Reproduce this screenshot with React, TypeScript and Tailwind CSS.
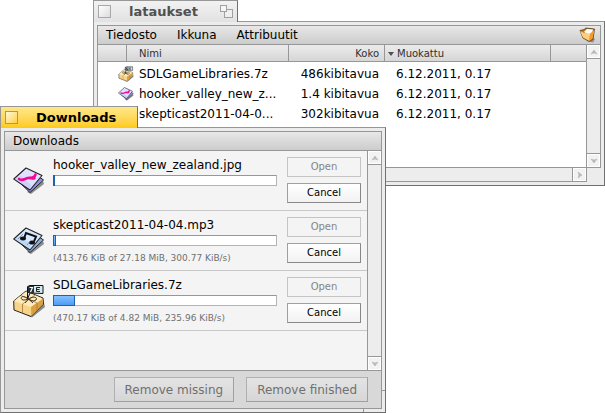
import React from "react";

type FileKind = "image" | "audio" | "archive";

function FileIcon({ kind, className }: { kind: FileKind; className: string }) {
  if (kind === "archive") {
    return (
      <svg viewBox="0 0 32 34" className={className} aria-hidden="true">
        <path d="M14 31 L19 33.500 L32 23 L31 19Z" fill="#8a8a8a" />
        <path d="M0.700 17 L13 7 L30 14 L30.500 20 L18 32.500 L1 26Z" fill="#f8d48a" stroke="#222" strokeWidth="1" strokeLinejoin="round" />
        <path d="M1 17 L13 7.500 L29.500 14.500 L18 23Z" fill="#ffeab8" />
        <path d="M18 23 L29.700 15 L30 20 L18.300 32Z" fill="#dca040" />
        <path d="M8 11.500 L24 19 V26 M22 11 L9.500 20 V29" stroke="#a5793a" fill="none" strokeWidth="0.800" />
        <path d="M15.500 15 C9 10 7 14 9 15.500 C11 17 14 15 15.500 15 C20 12 25 13 23 16 C20 18 17 16 15.500 15 L12 19 M15.500 15 L20 19" stroke="#222" fill="none" strokeWidth="0.900" />
        <path d="M14.500 15 V2.500 L17 1.500 L30 1.500 V9.500 L17 9Z" fill="#d5e9ef" stroke="#111" strokeWidth="1" />
        <path d="M15 2 H21 V9 H15Z" fill="#253038" />
        <path d="M16.500 3.500 H19.500 L17.500 8" stroke="#fff" fill="none" strokeWidth="1.200" />
        <path d="M27 3.500 H23.500 V7.500 H27 M23.500 5.500 H26.500" stroke="#222" fill="none" strokeWidth="1" />
      </svg>
    );
  }
  return (
    <svg viewBox="0 0 32 28" className={className} aria-hidden="true">
      <path d="M18 27 L31 17 L30 14 L14 25Z" fill="#8c8c8c" />
      <path d="M5 14 L18 4 L30.500 13 L17 25.500Z" fill={kind === "image" ? "#8d92e4" : "#8cabdc"} stroke="#222" />
      <path d="M0.800 12 L13 1 L29 8.500 L17 23Z" fill={kind === "image" ? "#dfe1ff" : "#d7e9ff"} stroke="#222" strokeWidth="1.100" strokeLinejoin="round" />
      <path d="M1.500 12 L17 22 L18 18 L8 9Z" fill={kind === "image" ? "#c0c4fa" : "#afcdf2"} opacity="0.600" />
      {kind === "image" ? (
        <path d="M6 12 C9 14.500 12 11.500 15 11 C18 10.500 20 12.500 21.500 11 M16 11 C19 11 22 10 22.500 7.500" stroke="#f20a95" strokeWidth="2.600" fill="none" strokeLinecap="round" />
      ) : (
        <g>
          <path d="M11 11.500 L13 6 L23 9.500 L21 14.500" stroke="#111" strokeWidth="2" fill="none" />
          <ellipse cx="10" cy="11.500" rx="3" ry="1.900" fill="#111" />
          <ellipse cx="19" cy="15.500" rx="3" ry="2.100" fill="#111" />
          <path d="M5 12 L10 7 M14 18 L17 14" stroke="#7896bb" strokeWidth="1" />
        </g>
      )}
    </svg>
  );
}

function FolderIcon() {
  return (
    <svg viewBox="0 0 17 16" className="h-4 w-[17px]" aria-hidden="true">
      <path d="M7 14 L14 15.500 L16 12 L12 10Z" fill="#8d8d8d" />
      <path d="M1 3.500 L5.500 2.500 L6.500 1 L15.500 2 L14 12 L10.500 14.500 L4 11Z" fill="#c27b20" stroke="#4b3820" strokeWidth="0.800" />
      <path d="M5 5 L8 2 L14 2.500 L12 9Z" fill="#fff" />
      <path d="M1 4 L5 6 L11 6.500 L10.500 14 L4 10.500Z" fill="#ffcf80" />
      <path d="M11 6.500 L15.500 3 L13.500 11.500 L10.500 14Z" fill="#f49b2c" />
    </svg>
  );
}

type Direction = "up" | "down" | "right";

const ARROWS: Record<Direction, string> = {
  up: "M1 6 L4 2 L7 6 L4 5Z",
  down: "M1 2 L4 3 L7 2 L4 6Z",
  right: "M2 1 L6 4 L2 7 L3 4Z",
};

function ScrollButton({ direction }: { direction: Direction }) {
  return (
    <button
      type="button"
      aria-label={"Scroll " + direction}
      className="flex size-[13px] shrink-0 items-center justify-center border border-white bg-[#f2f2f2]"
    >
      <svg viewBox="0 0 8 8" className="size-2" aria-hidden="true">
        <path d={ARROWS[direction]} fill="#b8b8b8" stroke="#b8b8b8" strokeWidth="0.600" />
      </svg>
    </button>
  );
}

function VerticalScrollBar() {
  return (
    <div className="flex w-[14px] shrink-0 flex-col border-l border-[#979797] bg-[#ededed]">
      <ScrollButton direction="up" />
      <div className="flex-1 border-y border-[#979797]" />
      <ScrollButton direction="down" />
    </div>
  );
}

const FILES: { name: string; size: string; date: string; kind: FileKind }[] = [
  { name: "SDLGameLibraries.7z", size: "486kibitavua", date: "6.12.2011, 0.17", kind: "archive" },
  { name: "hooker_valley_new_z...", size: "1.4 kibitavua", date: "6.12.2011, 0.17", kind: "image" },
  { name: "skepticast2011-04-0...", size: "302kibitavua", date: "6.12.2011, 0.17", kind: "audio" },
];

function FolderWindow() {
  return (
    <section className="absolute top-0 right-0 left-[93px]">
      <header className="relative z-10 flex h-[22px] w-[145px] items-center border-t border-r border-l border-[#979797] border-r-[#707070] bg-linear-to-b from-[#f2f2f2] to-[#e2e2e2] px-1">
        <button type="button" aria-label="Close" className="size-[13px] border border-[#a8a8a8] bg-linear-to-br from-white to-[#dcdcdc]" />
        <h2 className="flex-1 pl-[18px] text-[13px] leading-4 font-bold text-[#505050]">lataukset</h2>
        <button type="button" aria-label="Zoom" className="relative size-[13px]">
          <span className="absolute right-0 bottom-0 size-[9px] border border-[#a0a0a0] bg-[#efefef]" />
          <span className="absolute top-0 left-0 size-[7px] border border-[#a0a0a0] bg-[#f6f6f6]" />
        </button>
      </header>
      <div className="-mt-px border border-[#979797] border-r-[#707070] border-b-[#707070] bg-[#ececec] p-[3px]">
        <div className="border-t border-l border-[#979797]">
          <nav className="flex h-[19px] items-center gap-5 border-r border-b border-[#979797] bg-linear-to-b from-[#e8e8e8] to-[#cccccc] pr-1 pl-2">
            <button type="button">Tiedosto</button>
            <button type="button">Ikkuna</button>
            <button type="button">Attribuutit</button>
            <span className="ml-auto"><FolderIcon /></span>
          </nav>
          <div className="flex">
            <div className="min-w-0 flex-1 border-b border-[#979797] bg-white">
              <table className="w-full table-fixed border-collapse">
                <colgroup>
                  <col className="w-[29px]" />
                  <col className="w-[162px]" />
                  <col className="w-[96px]" />
                  <col className="w-[166px]" />
                  <col />
                </colgroup>
                <thead>
                  <tr className="h-[17px] bg-linear-to-b from-[#ececec] to-[#d4d4d4] text-[10px] leading-4 text-[#303030] shadow-[inset_0_-1px_0_#979797]">
                    <th className="p-0 shadow-[inset_-1px_0_0_#979797]" aria-label="Icon" />
                    <th className="p-0 pl-3 text-left font-normal shadow-[inset_-1px_0_0_#979797]">Nimi</th>
                    <th className="p-0 pr-[6px] text-right font-normal shadow-[inset_-1px_0_0_#979797]">Koko</th>
                    <th className="p-0 pl-[3px] text-left font-normal shadow-[inset_-1px_0_0_#979797]">
                      <span className="flex items-center gap-[3px]">
                        <svg viewBox="0 0 6 4" className="h-1 w-[6px]" aria-hidden="true"><path d="M0 0H6L3 4Z" fill="#505050" /></svg>
                        Muokattu
                      </span>
                    </th>
                    <th className="p-0" aria-label="More" />
                  </tr>
                </thead>
                <tbody>
                  <tr className="h-[2px]"><td colSpan={5} className="p-0" /></tr>
                  {FILES.map((file) => (
                    <tr key={file.name} className="h-5">
                      <td colSpan={2} className="p-0">
                        <span className="flex items-center gap-[5px] pl-5">
                          <FileIcon kind={file.kind} className="size-4" />
                          {file.name}
                        </span>
                      </td>
                      <td className="p-0 pr-[6px] text-right whitespace-nowrap">{file.size}</td>
                      <td className="p-0 pl-[11px]">{file.date}</td>
                      <td className="p-0" />
                    </tr>
                  ))}
                </tbody>
              </table>
              <div className="h-[43px]" />
            </div>
            <div className="flex border-r border-b border-[#979797]">
              <VerticalScrollBar />
            </div>
          </div>
          <div className="mr-[14px] flex h-[14px] justify-end border-r border-b border-[#979797] bg-[#ededed]">
            <div className="border-l border-[#979797]"><ScrollButton direction="right" /></div>
          </div>
        </div>
      </div>
    </section>
  );
}

const DOWNLOADS: { name: string; kind: FileKind; status?: string; done: number }[] = [
  { name: "hooker_valley_new_zealand.jpg", kind: "image", done: 1 },
  { name: "skepticast2011-04-04.mp3", kind: "audio", status: "(413.76 KiB of 27.18 MiB, 300.77 KiB/s)", done: 1.5 },
  { name: "SDLGameLibraries.7z", kind: "archive", status: "(470.17 KiB of 4.82 MiB, 235.96 KiB/s)", done: 10 },
];

function DownloadRow({ item }: { item: (typeof DOWNLOADS)[number] }) {
  return (
    <li className="flex h-[60px] border-b border-[#c8c8c8] pr-[6px] pl-2">
      <div className="flex w-8 shrink-0 items-center">
        <FileIcon kind={item.kind} className={item.kind === "archive" ? "h-[34px] w-8" : "h-7 w-8"} />
      </div>
      <div className="ml-2 min-w-0 flex-1 pt-[6px]">
        <div className="leading-4">{item.name}</div>
        <div
          role="progressbar"
          aria-label={item.name}
          aria-valuenow={item.done}
          className="mt-[2px] h-[11px] border border-[#b4b4b4] border-t-[#979797] bg-white"
        >
          <div
            className="-mt-px -ml-px h-[11px] min-w-[2px] border border-[#1c62b0] bg-linear-to-b from-[#86c0ff] to-[#4a9cf5]"
            style={{ width: item.done + "%" }}
          />
        </div>
        <div className="mt-[6px] text-[9px] leading-3 whitespace-nowrap text-[#707070]">{item.status}</div>
      </div>
      <div className="ml-[10px] flex w-[74px] shrink-0 flex-col gap-[6px] pt-[6px] text-[10px]">
        <button type="button" disabled className="h-5 border border-[#c4c4c4] bg-[#f4f4f4] leading-4 text-[#858585]">Open</button>
        <button type="button" className="h-5 border border-[#888888] border-t-[#a0a0a0] border-l-[#a0a0a0] bg-linear-to-b from-white to-[#f2f2f2] leading-4 text-black">Cancel</button>
      </div>
    </li>
  );
}

function DownloadsWindow() {
  const footerButton =
    "h-[25px] border border-[#b0b0b0] border-r-[#a0a0a0] border-b-[#a0a0a0] bg-linear-to-b from-[#e4e4e4] to-[#d6d6d6] px-[10px] whitespace-nowrap text-[#707070]";
  return (
    <section className="absolute top-[106px] left-0 w-[386px]">
      <header className="relative z-10 flex h-[22px] w-[138px] items-center border-t border-r border-l border-[#979797] border-r-[#707070] bg-linear-to-b from-[#ffe888] to-[#ffca05] px-1">
        <button type="button" aria-label="Close" className="size-[13px] border border-[#c59a10] bg-linear-to-br from-[#fff8d5] to-[#ffcf30]" />
        <h2 className="flex-1 pl-[18px] text-[13px] leading-4 font-bold">Downloads</h2>
      </header>
      <div className="relative -mt-px border border-[#979797] border-r-[#707070] border-b-[#707070] bg-[#ececec] p-[3px]">
        <span className="absolute right-0 bottom-[21px] h-px w-[3px] bg-[#979797]" />
        <span className="absolute right-[21px] bottom-0 h-[3px] w-px bg-[#979797]" />
        <div className="border border-[#979797]">
          <div className="flex h-[19px] items-center border-b border-[#979797] bg-linear-to-b from-[#e8e8e8] to-[#cccccc] pl-2">
            <button type="button">Downloads</button>
          </div>
          <div className="flex">
            <ul className="min-w-0 flex-1 bg-[#f4f4f4] pb-[39px]">
              {DOWNLOADS.map((item) => (
                <DownloadRow key={item.name} item={item} />
              ))}
            </ul>
            <VerticalScrollBar />
          </div>
          <footer className="flex justify-end gap-3 border-t border-[#979797] bg-[#d8d8d8] pt-[6px] pr-[13px] pb-[6px]">
            <button type="button" disabled className={footerButton}>Remove missing</button>
            <button type="button" disabled className={footerButton}>Remove finished</button>
          </footer>
        </div>
      </div>
    </section>
  );
}

export default function App() {
  return (
    <main className="relative min-h-screen overflow-hidden bg-white font-['DejaVu_Sans',sans-serif] text-[12px] leading-4 text-black">
      <FolderWindow />
      <DownloadsWindow />
    </main>
  );
}
